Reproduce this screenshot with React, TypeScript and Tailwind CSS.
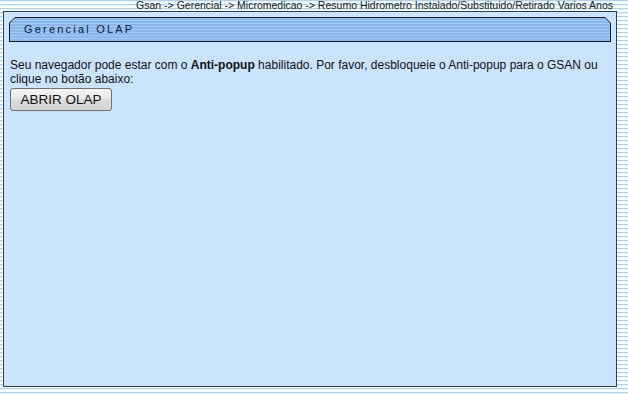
const App = () => {
  return (
    <div className="w-[628px] h-[394px] overflow-hidden bg-[repeating-linear-gradient(to_bottom,#a9d3f0_0px,#a9d3f0_1px,#e4f2fb_1px,#e4f2fb_2px,#ffffff_2px,#ffffff_4px)] font-['Liberation_Sans',Arial,sans-serif]">
      <div className="h-[10px] flex justify-end pr-[15px] text-[10.5px] leading-[10px] text-[#1a1a1a]">
        <span>
          Gsan -&gt; Gerencial -&gt; Micromedicao -&gt; Resumo Hidrometro Instalado/Substituido/Retirado Varios Anos
        </span>
      </div>
      <div className="ml-[3px] mt-[1px] w-[614px] h-[376px] border border-[#2d3e57] bg-[#cbe4fd] pt-[5px] px-[5px]">
        {/* cabeçalho com cantos chanfrados */}
        <div className="h-[25px] bg-[#1a1a2a] p-[1px] [clip-path:polygon(6px_0,calc(100%-6px)_0,100%_6px,100%_100%,0_100%,0_6px)]">
          <div className="h-full flex items-center pl-[14px] bg-[repeating-linear-gradient(to_bottom,#8ab6ec_0px,#8ab6ec_2px,#a6c9f3_2px,#a6c9f3_3px)] [clip-path:polygon(5px_0,calc(100%-5px)_0,100%_5px,100%_100%,0_100%,0_5px)]">
            <span className="text-[11px] tracking-[2.2px] text-[#0b1a3a]">
              Gerencial OLAP
            </span>
          </div>
        </div>
        <div className="pt-[16px] pl-[1px] text-[12px] leading-[14px] text-[#111]">
          <p>
            Seu navegador pode estar com o <b>Anti-popup</b> habilitado. Por
            favor, desbloqueie o Anti-popup para o GSAN ou clique no botão
            abaixo:
          </p>
          <button className="mt-[2px] w-[102px] h-[23px] border border-[#707070] rounded-[3px] bg-[linear-gradient(to_bottom,#f4f4f4,#e8e8e8_50%,#dcdcdc_50%,#d4d4d4)] text-[13.5px] leading-[21px] text-[#111]">
            ABRIR OLAP
          </button>
        </div>
      </div>
    </div>
  );
};

export default App;
